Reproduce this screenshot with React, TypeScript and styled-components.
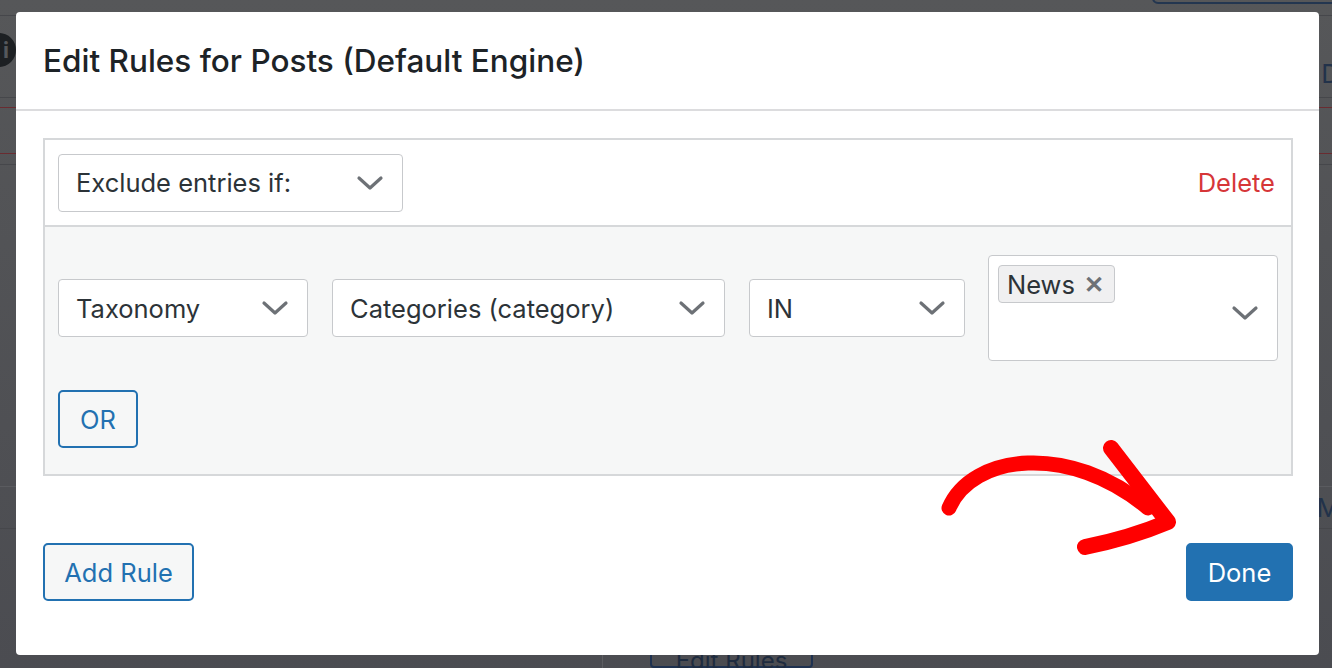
import styled, { createGlobalStyle } from "styled-components";

const GlobalStyle = createGlobalStyle`
  html, body {
    margin: 0;
    padding: 0;
    background: #4d4e52;
  }
  * {
    box-sizing: border-box;
  }
  body {
    font-family: Inter, "Noto Sans", "Liberation Sans", sans-serif;
  }
`;

const Chevron: React.FC = () => (
  <svg width="28" height="16" viewBox="0 0 28 16" fill="none">
    <path
      d="M3 3 L14 13 L25 3"
      stroke="#6d7176"
      strokeWidth="3.2"
      strokeLinecap="round"
      strokeLinejoin="round"
    />
  </svg>
);

const Arrow: React.FC = () => (
  <ArrowSvg width="270" height="140" viewBox="0 0 270 140" fill="none">
    <path
      d="M19 78 C 42 24, 140 12, 218 78"
      stroke="#ff0000"
      strokeWidth="15"
      strokeLinecap="round"
    />
    <path
      d="M181 18 Q 212 58 238 92 Q 200 108 155 117"
      stroke="#ff0000"
      strokeWidth="16"
      strokeLinecap="round"
      strokeLinejoin="round"
    />
  </ArrowSvg>
);

const selects = [
  { label: "Taxonomy", width: 250 },
  { label: "Categories (category)", width: 393 },
  { label: "IN", width: 216 },
];

const App: React.FC = () => {
  return (
    <>
      <GlobalStyle />
      <Stage>
        <Backdrop>
          <BackTop>
            <BackTopButton />
          </BackTop>
          <BackRow $height={82}>
            <InfoDot>i</InfoDot>
            <BackSideText $shift={34}>D</BackSideText>
          </BackRow>
          <BackRow $height={10} $line="#6a2c31" />
          <BackRow $height={46} $line="#6a2c31" />
          <BackRow $height={11} />
          <BackRow $height={322} $line="#5a5b5f" />
          <BackRow $height={42}>
            <span />
            <BackSideText $shift={0}>M</BackSideText>
          </BackRow>
          <BackSpacer />
          <BackBottom>
            <BackColumn />
            <BackButton>Edit Rules</BackButton>
          </BackBottom>
        </Backdrop>

        <Modal>
          <ModalHeader>
            <Title>Edit Rules for Posts (Default Engine)</Title>
          </ModalHeader>

          <ModalBody>
            <RuleBox>
              <RuleTop>
                <Select $width={345}>
                  <span>Exclude entries if:</span>
                  <Chevron />
                </Select>
                <DeleteLink>Delete</DeleteLink>
              </RuleTop>

              <RuleConditions>
                <ConditionRow>
                  {selects.map((s) => (
                    <Select key={s.label} $width={s.width}>
                      <span>{s.label}</span>
                      <Chevron />
                    </Select>
                  ))}
                  <MultiSelect>
                    <Tags>
                      <Tag>
                        News <TagRemove>✕</TagRemove>
                      </Tag>
                    </Tags>
                    <Chevron />
                  </MultiSelect>
                </ConditionRow>
                <OutlineButton $width={80}>OR</OutlineButton>
              </RuleConditions>
            </RuleBox>
          </ModalBody>

          <ModalFooter>
            <OutlineButton $width={151}>Add Rule</OutlineButton>
            <PrimaryButton>Done</PrimaryButton>
          </ModalFooter>
        </Modal>

        <Arrow />
      </Stage>
    </>
  );
};

export default App;

const Stage = styled.div`
  position: relative;
  width: 1332px;
  height: 668px;
  overflow: hidden;
  background: linear-gradient(180deg, #565759 0%, #4b4c51 100%);
`;

const Backdrop = styled.div`
  display: flex;
  flex-direction: column;
  height: 100%;
`;

const BackTop = styled.div`
  height: 16px;
  border-bottom: 1px solid #46474b;
  display: flex;
  justify-content: flex-end;
`;

const BackTopButton = styled.div`
  width: 190px;
  height: 14px;
  margin-top: -10px;
  margin-right: -10px;
  border: 2px solid #233650;
  border-radius: 6px;
`;

const BackRow = styled.div<{ $height: number; $line?: string }>`
  height: ${(p) => p.$height}px;
  flex-shrink: 0;
  border-bottom: 1px solid ${(p) => p.$line ?? "#46474b"};
  display: flex;
  align-items: center;
  justify-content: space-between;
`;

const InfoDot = styled.div`
  width: 34px;
  height: 34px;
  margin-left: -18px;
  margin-top: -14px;
  border-radius: 50%;
  background: #1d2023;
  color: #55585c;
  font-weight: 700;
  font-size: 22px;
  display: flex;
  align-items: center;
  justify-content: flex-end;
  padding-right: 7px;
`;

const BackSideText = styled.div<{ $shift: number }>`
  margin-right: -8px;
  margin-top: ${(p) => p.$shift}px;
  color: #22324a;
  font-size: 26px;
`;

const BackSpacer = styled.div`
  flex: 1;
`;

const BackBottom = styled.div`
  height: 14px;
  flex-shrink: 0;
  display: flex;
  align-items: flex-start;
  padding-left: 602px;
`;

const BackColumn = styled.div`
  width: 48px;
  height: 14px;
  border-left: 1px solid #5c5d61;
`;

const BackButton = styled.div`
  width: 163px;
  height: 40px;
  margin-top: -26px;
  border: 2px solid #1e3150;
  border-radius: 4px;
  color: #1e2b3f;
  font-size: 24px;
  text-align: center;
  line-height: 62px;
`;

const Modal = styled.div`
  position: absolute;
  left: 16px;
  top: 12px;
  width: 1303px;
  height: 643px;
  background: #ffffff;
  border-radius: 4px;
  display: flex;
  flex-direction: column;
`;

const ModalHeader = styled.div`
  height: 99px;
  padding: 0 27px;
  display: flex;
  align-items: center;
  border-bottom: 2px solid #dcdcde;
`;

const Title = styled.h1`
  margin: 0;
  font-size: 31.5px;
  font-weight: 500;
  color: #1d2327;
  letter-spacing: 0;
`;

const ModalBody = styled.div`
  padding: 27px 26px 0 27px;
`;

const RuleBox = styled.div`
  border: 2px solid #d6d8da;
  display: flex;
  flex-direction: column;
`;

const RuleTop = styled.div`
  height: 87px;
  padding: 0 16px 0 13px;
  display: flex;
  align-items: center;
  justify-content: space-between;
  border-bottom: 2px solid #d6d8da;
  background: #ffffff;
`;

const Select = styled.div<{ $width: number }>`
  width: ${(p) => p.$width}px;
  height: 58px;
  flex-shrink: 0;
  padding: 0 18px 0 17px;
  display: flex;
  align-items: center;
  justify-content: space-between;
  background: #ffffff;
  border: 1.5px solid #c7c9cc;
  border-radius: 4px;
  color: #2c3338;
  font-size: 25.5px;
`;

const DeleteLink = styled.span`
  color: #d63638;
  font-size: 25.5px;
`;

const RuleConditions = styled.div`
  background: #f6f7f7;
  padding: 28px 13px 26px 13px;
  display: flex;
  flex-direction: column;
  align-items: flex-start;
  gap: 29px;
`;

const ConditionRow = styled.div`
  display: flex;
  align-items: center;
  gap: 24px;
`;

const MultiSelect = styled.div`
  width: 290px;
  height: 106px;
  margin-left: -1px;
  padding: 9px 18px 0 9px;
  display: flex;
  align-items: center;
  justify-content: space-between;
  background: #ffffff;
  border: 1.5px solid #c7c9cc;
  border-radius: 4px;
`;

const Tags = styled.div`
  align-self: flex-start;
  display: flex;
  gap: 6px;
`;

const Tag = styled.span`
  height: 38px;
  padding: 0 10px 0 8px;
  display: inline-flex;
  align-items: center;
  gap: 9px;
  background: #f0f0f1;
  border: 1.5px solid #c7c9cc;
  border-radius: 4px;
  color: #2c3338;
  font-size: 25.5px;
`;

const TagRemove = styled.span`
  color: #6d7176;
  font-size: 24px;
  font-weight: 700;
`;

const OutlineButton = styled.button<{ $width: number }>`
  width: ${(p) => p.$width}px;
  height: 58px;
  padding: 0;
  background: #f6f7f7;
  border: 2px solid #2271b1;
  border-radius: 5px;
  color: #2271b1;
  font-family: inherit;
  font-size: 25.5px;
  cursor: pointer;
`;

const PrimaryButton = styled.button`
  width: 107px;
  height: 58px;
  padding: 0;
  background: #2271b1;
  border: 2px solid #2271b1;
  border-radius: 5px;
  color: #ffffff;
  font-family: inherit;
  font-size: 25.5px;
  cursor: pointer;
`;

const ModalFooter = styled.div`
  margin-top: auto;
  padding: 0 26px 54px 27px;
  display: flex;
  justify-content: space-between;
  align-items: center;
`;

const ArrowSvg = styled.svg`
  position: absolute;
  left: 930px;
  top: 430px;
  pointer-events: none;
`;
